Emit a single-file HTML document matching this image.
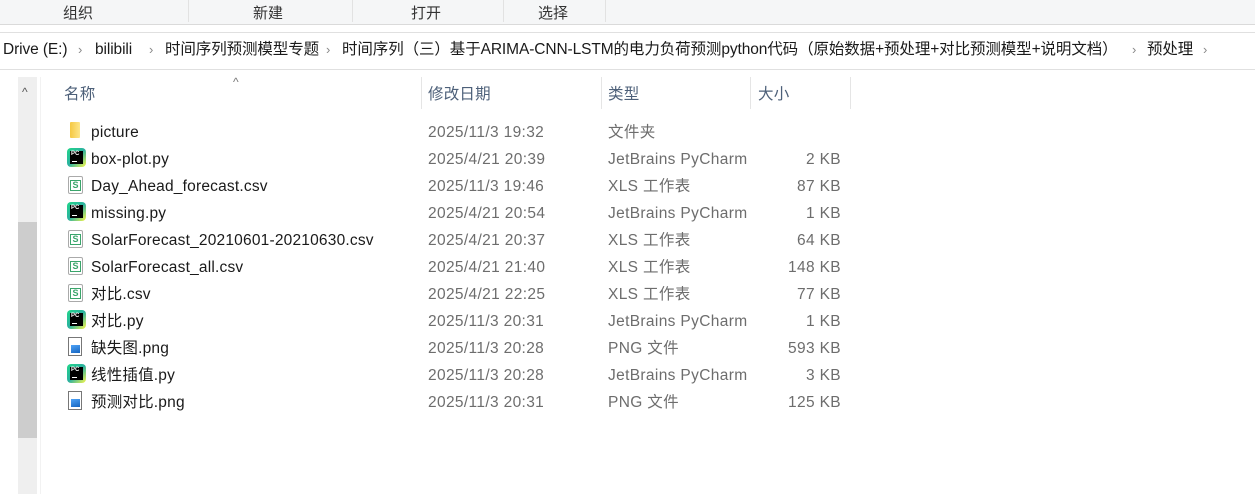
<!DOCTYPE html>
<html><head><meta charset="utf-8"><style>
*{margin:0;padding:0;box-sizing:border-box}
body{width:1255px;height:494px;overflow:hidden;background:#fff;font-family:"Liberation Sans","Noto Sans CJK SC",sans-serif;font-size:15.5px;color:#1a1a1a;position:relative}
.a{position:absolute;white-space:nowrap;line-height:20px;letter-spacing:.2px;margin-top:2px}
.top{position:absolute;left:0;top:0;width:1255px;height:25px;background:#f5f6f7;border-bottom:1px solid #dadada}
.sep{position:absolute;top:0;width:1px;height:22px;background:#e2e2e2}
.tb{position:absolute;top:4px;font-size:15px;color:#333;line-height:20px}
.bc{position:absolute;left:0;top:32px;width:1255px;height:38px;border-top:1px solid #e0e0e0;border-bottom:1px solid #e0e0e0}
.b{position:absolute;top:40px;white-space:nowrap;line-height:20px;font-size:15.5px;letter-spacing:-.1px}
.c{position:absolute;top:40px;line-height:20px;color:#888;font-size:13px}
.g{color:#6d6d6d;letter-spacing:.35px}
.h{color:#4d6079;top:83px}
.hs{position:absolute;top:77px;width:1px;height:32px;background:#e5e5e5}
.pc{position:absolute;left:67px;width:19px;height:19px;border-radius:4px;background:linear-gradient(135deg,#21d789 0%,#2bb0a0 50%,#fcf84a 100%)}
.pc i{position:absolute;left:3px;top:3px;width:13px;height:13px;background:#000;color:#fff;font-size:6px;font-style:normal;font-weight:bold;line-height:7px;padding-left:1px}
.pc i:after{content:"";position:absolute;left:2px;bottom:2px;width:5px;height:1px;background:#fff}
.xl{position:absolute;left:68px;width:15px;height:18px;border:1px solid #aaa;border-radius:2px;background:#fff}
.xl b{position:absolute;left:1px;top:3px;width:11px;height:11px;border:1px solid #3aa56b;color:#3aa56b;font-size:9px;line-height:9px;text-align:center}
.png{position:absolute;left:68px;width:14px;height:19px;border:1px solid #777;background:#fff}
.png b{position:absolute;left:2px;top:7px;width:9px;height:8px;background:linear-gradient(160deg,#4fa3f7,#1565c0)}
.fd{position:absolute;left:70px;width:10px;height:16px;background:linear-gradient(90deg,#f5c842,#fde58a);border-radius:1px}
</style></head><body>
<div class="top">
<div class="sep" style="left:188px"></div><div class="sep" style="left:352px"></div><div class="sep" style="left:503px"></div><div class="sep" style="left:605px"></div>
<div class="tb" style="left:63px">组织</div><div class="tb" style="left:253px">新建</div><div class="tb" style="left:411px">打开</div><div class="tb" style="left:538px">选择</div>
</div>
<div class="bc"></div>
<div class="b" style="left:3px">Drive (E:)</div><div class="c" style="left:78px">›</div>
<div class="b" style="left:95px">bilibili</div><div class="c" style="left:149px">›</div>
<div class="b" style="left:165px">时间序列预测模型专题</div><div class="c" style="left:326px">›</div>
<div class="b" style="left:342px">时间序列（三）基于ARIMA-CNN-LSTM的电力负荷预测python代码（原始数据+预处理+对比预测模型+说明文档）</div><div class="c" style="left:1132px">›</div>
<div class="b" style="left:1147px">预处理</div><div class="c" style="left:1203px">›</div>
<div style="position:absolute;left:18px;top:77px;width:19px;height:417px;background:#efefef"></div>
<div style="position:absolute;left:18px;top:222px;width:19px;height:216px;background:#cdcdcd"></div>
<div style="position:absolute;left:40px;top:77px;width:1px;height:417px;background:#f2f2f2"></div>
<div class="a" style="left:22px;top:80px;font-size:12px;color:#555">^</div>
<div class="a" style="left:233px;top:70px;font-size:12px;color:#777">^</div>
<div class="hs" style="left:421px"></div><div class="hs" style="left:601px"></div><div class="hs" style="left:750px"></div><div class="hs" style="left:850px"></div>
<div class="a h" style="left:64px">名称</div><div class="a h" style="left:428px">修改日期</div><div class="a h" style="left:608px">类型</div><div class="a h" style="left:758px">大小</div>

<div class="fd" style="top:122px"></div>
<div class="a" style="left:91px;top:121px">picture</div><div class="a g" style="left:428px;top:121px">2025/11/3 19:32</div><div class="a g" style="left:608px;top:121px">文件夹</div>

<div class="pc" style="top:148px"><i>PC</i></div>
<div class="a" style="left:91px;top:148px">box-plot.py</div><div class="a g" style="left:428px;top:148px">2025/4/21 20:39</div><div class="a g" style="left:608px;top:148px">JetBrains PyCharm</div><div class="a g" style="right:414px;top:148px">2 KB</div>

<div class="xl" style="top:176px"><b>S</b></div>
<div class="a" style="left:91px;top:175px">Day_Ahead_forecast.csv</div><div class="a g" style="left:428px;top:175px">2025/11/3 19:46</div><div class="a g" style="left:608px;top:175px">XLS 工作表</div><div class="a g" style="right:414px;top:175px">87 KB</div>

<div class="pc" style="top:202px"><i>PC</i></div>
<div class="a" style="left:91px;top:202px">missing.py</div><div class="a g" style="left:428px;top:202px">2025/4/21 20:54</div><div class="a g" style="left:608px;top:202px">JetBrains PyCharm</div><div class="a g" style="right:414px;top:202px">1 KB</div>

<div class="xl" style="top:230px"><b>S</b></div>
<div class="a" style="left:91px;top:229px">SolarForecast_20210601-20210630.csv</div><div class="a g" style="left:428px;top:229px">2025/4/21 20:37</div><div class="a g" style="left:608px;top:229px">XLS 工作表</div><div class="a g" style="right:414px;top:229px">64 KB</div>

<div class="xl" style="top:257px"><b>S</b></div>
<div class="a" style="left:91px;top:256px">SolarForecast_all.csv</div><div class="a g" style="left:428px;top:256px">2025/4/21 21:40</div><div class="a g" style="left:608px;top:256px">XLS 工作表</div><div class="a g" style="right:414px;top:256px">148 KB</div>

<div class="xl" style="top:284px"><b>S</b></div>
<div class="a" style="left:91px;top:283px">对比.csv</div><div class="a g" style="left:428px;top:283px">2025/4/21 22:25</div><div class="a g" style="left:608px;top:283px">XLS 工作表</div><div class="a g" style="right:414px;top:283px">77 KB</div>

<div class="pc" style="top:310px"><i>PC</i></div>
<div class="a" style="left:91px;top:310px">对比.py</div><div class="a g" style="left:428px;top:310px">2025/11/3 20:31</div><div class="a g" style="left:608px;top:310px">JetBrains PyCharm</div><div class="a g" style="right:414px;top:310px">1 KB</div>

<div class="png" style="top:337px"><b></b></div>
<div class="a" style="left:91px;top:337px">缺失图.png</div><div class="a g" style="left:428px;top:337px">2025/11/3 20:28</div><div class="a g" style="left:608px;top:337px">PNG 文件</div><div class="a g" style="right:414px;top:337px">593 KB</div>

<div class="pc" style="top:364px"><i>PC</i></div>
<div class="a" style="left:91px;top:364px">线性插值.py</div><div class="a g" style="left:428px;top:364px">2025/11/3 20:28</div><div class="a g" style="left:608px;top:364px">JetBrains PyCharm</div><div class="a g" style="right:414px;top:364px">3 KB</div>

<div class="png" style="top:391px"><b></b></div>
<div class="a" style="left:91px;top:391px">预测对比.png</div><div class="a g" style="left:428px;top:391px">2025/11/3 20:31</div><div class="a g" style="left:608px;top:391px">PNG 文件</div><div class="a g" style="right:414px;top:391px">125 KB</div>
</body></html>
